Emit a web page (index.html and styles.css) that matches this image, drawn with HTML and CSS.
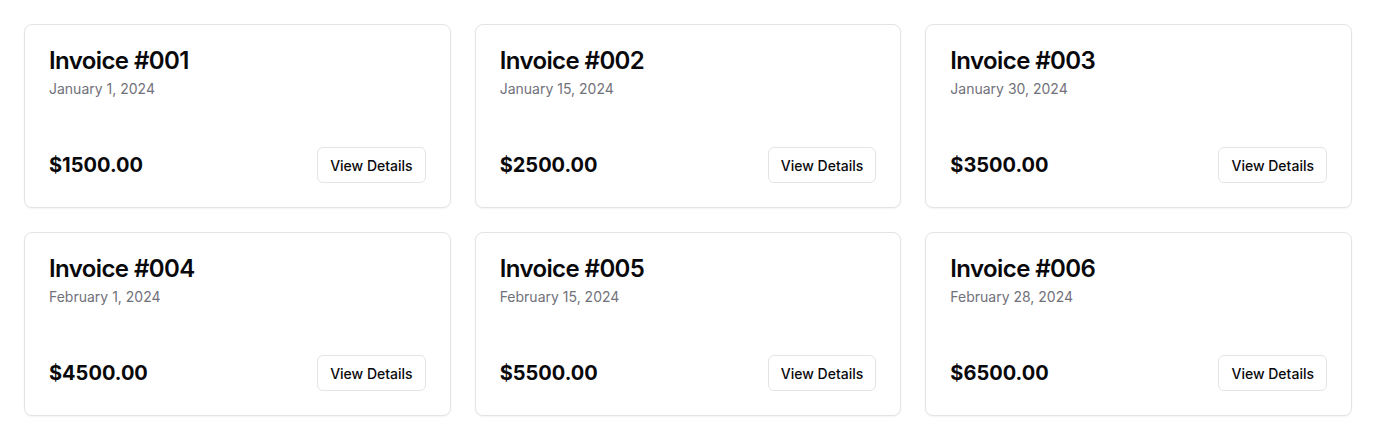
FILE: index.html
```html
<!DOCTYPE html>
<html>
<head>
<meta charset="utf-8">
<link rel="stylesheet" href="styles.css">
</head>
<body>
<div class="grid">
  <div class="card">
    <div class="card-header"><h3 class="title">Invoice #001</h3><p class="date">January 1, 2024</p></div>
    <div class="card-footer"><span class="amount">$1500.00</span><button class="btn">View Details</button></div>
  </div>
  <div class="card">
    <div class="card-header"><h3 class="title">Invoice #002</h3><p class="date">January 15, 2024</p></div>
    <div class="card-footer"><span class="amount">$2500.00</span><button class="btn">View Details</button></div>
  </div>
  <div class="card">
    <div class="card-header"><h3 class="title">Invoice #003</h3><p class="date">January 30, 2024</p></div>
    <div class="card-footer"><span class="amount">$3500.00</span><button class="btn">View Details</button></div>
  </div>
  <div class="card">
    <div class="card-header"><h3 class="title">Invoice #004</h3><p class="date">February 1, 2024</p></div>
    <div class="card-footer"><span class="amount">$4500.00</span><button class="btn">View Details</button></div>
  </div>
  <div class="card">
    <div class="card-header"><h3 class="title">Invoice #005</h3><p class="date">February 15, 2024</p></div>
    <div class="card-footer"><span class="amount">$5500.00</span><button class="btn">View Details</button></div>
  </div>
  <div class="card">
    <div class="card-header"><h3 class="title">Invoice #006</h3><p class="date">February 28, 2024</p></div>
    <div class="card-footer"><span class="amount">$6500.00</span><button class="btn">View Details</button></div>
  </div>
</div>
</body>
</html>
```
FILE: styles.css
```css
* { box-sizing: border-box; }
html, body { margin: 0; padding: 0; background: #fff; }
body {
  font-family: Inter, "Liberation Sans", sans-serif;
  color: #09090b;
  padding: 24px;
}
.grid {
  display: grid;
  grid-template-columns: repeat(3, 1fr);
  gap: 24px;
}
.card {
  border: 1px solid #e4e4e7;
  border-radius: 8px;
  background: #fff;
  box-shadow: 0 1px 2px 0 rgba(0,0,0,0.05);
}
.card-header {
  padding: 24px;
  display: flex;
  flex-direction: column;
  gap: 6px;
}
.title {
  margin: 0;
  font-size: 24px;
  line-height: 24px;
  font-weight: 600;
  letter-spacing: -0.6px;
}
.date {
  margin: 0;
  font-size: 14px;
  line-height: 20px;
  color: #71717a;
}
.card-footer {
  display: flex;
  align-items: center;
  justify-content: space-between;
  padding: 0 24px 24px;
  margin-top: 24px;
}
.amount {
  font-size: 20px;
  line-height: 28px;
  font-weight: 700;
}
.btn {
  font-family: inherit;
  height: 36px;
  padding: 0 12px;
  font-size: 14px;
  font-weight: 500;
  color: #09090b;
  background: #fff;
  border: 1px solid #e4e4e7;
  border-radius: 6px;
}
```
